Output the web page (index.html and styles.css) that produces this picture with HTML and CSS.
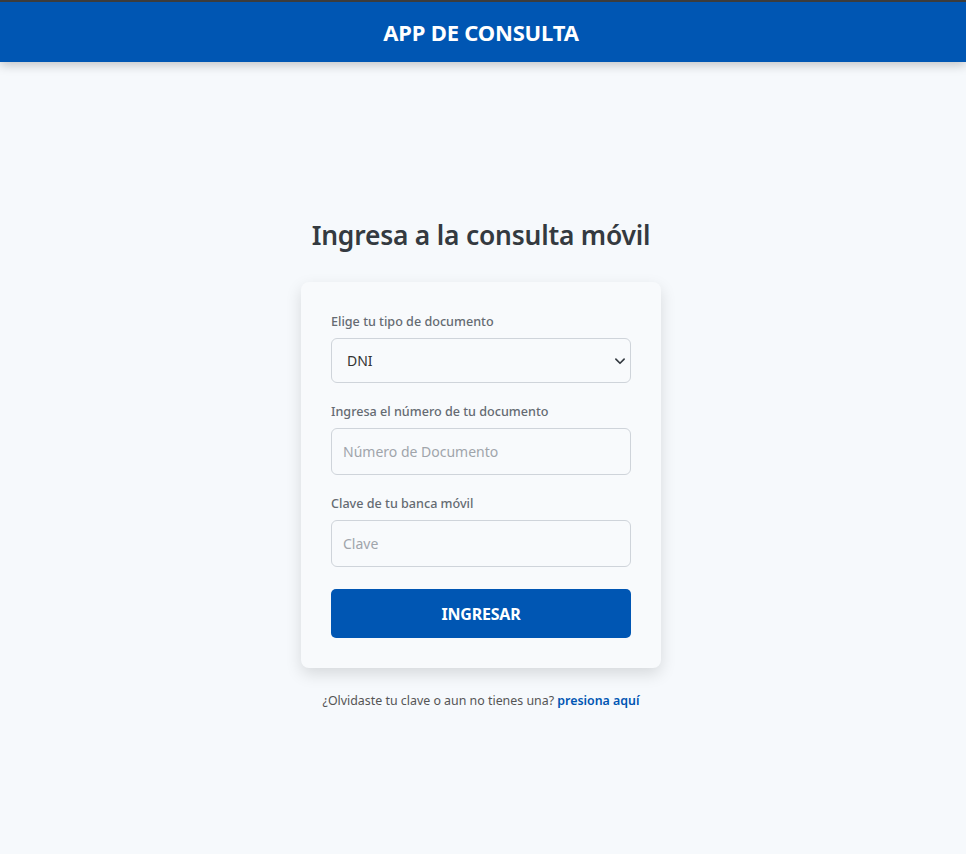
FILE: index.html
```html
<!DOCTYPE html>
<html lang="es">
<head>
<meta charset="utf-8">
<title>App de Consulta</title>
<link rel="stylesheet" href="styles.css">
</head>
<body>
<header class="topbar">
  <h1 class="brand">APP DE CONSULTA</h1>
</header>
<main class="main">
  <h2 class="title">Ingresa a la consulta móvil</h2>
  <form class="card">
    <div class="field">
      <label class="label" for="tipo">Elige tu tipo de documento</label>
      <div class="select-wrap">
        <select id="tipo" class="control select">
          <option>DNI</option>
        </select>
        <svg class="chev" width="12" height="12" viewBox="0 0 16 16"><path d="M2.5 5.5 8 11l5.5-5.5" fill="none" stroke="#343a40" stroke-width="2.2" stroke-linecap="round" stroke-linejoin="round"/></svg>
      </div>
    </div>
    <div class="field">
      <label class="label" for="num">Ingresa el número de tu documento</label>
      <input id="num" class="control input" type="text" placeholder="Número de Documento">
    </div>
    <div class="field last">
      <label class="label" for="clave">Clave de tu banca móvil</label>
      <input id="clave" class="control input" type="password" placeholder="Clave">
    </div>
    <button type="button" class="btn">INGRESAR</button>
  </form>
  <p class="foot">¿Olvidaste tu clave o aun no tienes una? <a class="link" href="#">presiona aquí</a></p>
</main>
</body>
</html>
```

FILE: styles.css
```css
* { box-sizing: border-box; }
html, body { margin: 0; padding: 0; }
body {
  background: #f6f9fc;
  font-family: "Noto Sans", "Open Sans", sans-serif;
  color: #333;
  min-height: 854px;
  border-top: 2px solid #3c3c3c;
  padding-right: 4px;
}
.topbar {
  background: #0056b3;
  height: 60px;
  display: flex;
  align-items: center;
  justify-content: center;
  box-shadow: 0 3px 10px rgba(0, 0, 0, 0.22);
  margin-right: -4px;
  padding-right: 4px;
}
.brand {
  margin: 0;
  color: #fff;
  font-size: 22px;
  font-weight: 700;
  letter-spacing: -0.2px;
}
.main {
  display: flex;
  flex-direction: column;
  align-items: center;
  padding-top: 154px;
}
.title {
  margin: 0 0 28px;
  font-size: 26.4px;
  font-weight: 600;
  color: #343a40;
  line-height: 38px;
  letter-spacing: -0.2px;
}
.card {
  width: 360px;
  background: #f8fafc;
  border-radius: 8px;
  padding: 30px;
  box-shadow: 0 6px 16px rgba(0, 0, 0, 0.13);
}
.field { margin-bottom: 19px; display: flex; flex-direction: column; }
.field.last { margin-bottom: 22px; }
.label {
  font-size: 12.6px;
  font-weight: 500;
  color: #656b72;
  line-height: 20px;
  margin-bottom: 6px;
}
.select-wrap { position: relative; }
.control {
  width: 300px;
  border: 1px solid #cfd4da;
  border-radius: 6px;
  background: #f8fafc;
  font-family: inherit;
  font-size: 14px;
  color: #333;
  padding: 0 11px;
  outline: none;
}
.select {
  height: 45px;
  appearance: none;
  -webkit-appearance: none;
  padding-left: 15px;
}
.chev {
  position: absolute;
  right: 5px;
  top: 17px;
  pointer-events: none;
}
.input { height: 47px; }
.input::placeholder { color: #a0a5ab; }
.btn {
  width: 300px;
  height: 49px;
  border: none;
  border-radius: 5px;
  background: #0056b3;
  color: #fff;
  font-family: inherit;
  font-size: 16px;
  font-weight: 700;
  letter-spacing: -0.2px;
  cursor: pointer;
}
.foot {
  margin: 24px 0 0;
  font-size: 12.4px;
  color: #555;
}
.link {
  color: #0056b3;
  font-weight: 600;
  text-decoration: none;
}
```
